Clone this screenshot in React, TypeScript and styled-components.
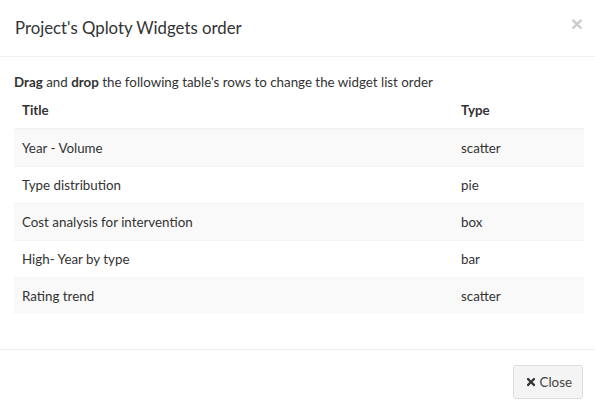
import { createGlobalStyle } from "styled-components";
import styled from "styled-components";
import { FaTimes } from "react-icons/fa";

const GlobalStyle = createGlobalStyle`
  html, body {
    margin: 0;
    padding: 0;
    background: #fff;
  }
  body {
    font-family: "Lato", "Liberation Sans", sans-serif;
    font-size: 13.35px;
    line-height: 20px;
    color: #333;
  }
`;

const widgets = [
  { title: "Year - Volume", type: "scatter" },
  { title: "Type distribution", type: "pie" },
  { title: "Cost analysis for intervention", type: "box" },
  { title: "High- Year by type", type: "bar" },
  { title: "Rating trend", type: "scatter" },
];

const App = () => {
  return (
    <>
      <GlobalStyle />
      <Modal>
        <Header>
          <Title>Project's Qploty Widgets order</Title>
          <Dismiss type="button">×</Dismiss>
        </Header>
        <Body>
          <Hint>
            <b>Drag</b> and <b>drop</b> the following table's rows to change
            the widget list order
          </Hint>
          <Table>
            <thead>
              <tr>
                <Th>Title</Th>
                <Th>Type</Th>
              </tr>
            </thead>
            <tbody>
              {widgets.map((w, i) => (
                <Row key={i} $striped={i % 2 === 0}>
                  <Td>{w.title}</Td>
                  <Td>{w.type}</Td>
                </Row>
              ))}
            </tbody>
          </Table>
        </Body>
        <Footer>
          <Button type="button">
            <FaTimes />
            Close
          </Button>
        </Footer>
      </Modal>
    </>
  );
};

export default App;

const Modal = styled.div`
  width: 595px;
  background: #fff;
`;

const Header = styled.div`
  display: flex;
  align-items: flex-start;
  justify-content: space-between;
  padding: 15px 12px 15px 15px;
  border-bottom: 1px solid #f0f0f0;
`;

const Title = styled.h4`
  margin: 0;
  font-size: 16.8px;
  font-weight: 400;
  line-height: 26px;
  color: #333;
`;

const Dismiss = styled.button`
  background: transparent;
  border: 0;
  padding: 0;
  margin-top: -2px;
  font-family: "Liberation Sans", sans-serif;
  font-size: 21px;
  font-weight: 700;
  line-height: 1;
  color: #000;
  opacity: 0.2;
  cursor: pointer;
`;

const Body = styled.div`
  padding: 15px 14px 15px 14px;
`;

const Hint = styled.p`
  margin: 0;
  b {
    font-weight: 700;
  }
`;

const Table = styled.table`
  width: 570px;
  border-collapse: collapse;
  margin-bottom: 20px;
`;

const Th = styled.th`
  text-align: left;
  font-weight: 700;
  padding: 8px;
  border-bottom: 2px solid #f4f4f4;
  &:first-child {
    width: 423px;
  }
`;

const Row = styled.tr<{ $striped: boolean }>`
  background: ${(p) => (p.$striped ? "#f9f9f9" : "#fff")};
  border-top: 1px solid #f4f4f4;
`;

const Td = styled.td`
  padding: 8px;
`;

const Footer = styled.div`
  display: flex;
  justify-content: flex-end;
  padding: 15px 12px 15px 15px;
  border-top: 1px solid #f0f0f0;
`;

const Button = styled.button`
  display: inline-flex;
  align-items: center;
  gap: 3px;
  height: 34px;
  padding: 6px 10px 6px 11px;
  font-family: inherit;
  font-size: inherit;
  line-height: 20px;
  color: #444;
  background: #f4f4f4;
  border: 1px solid #ddd;
  border-radius: 3px;
  cursor: pointer;
  svg {
    width: 12px;
    height: 12px;
    color: #333;
  }
`;
